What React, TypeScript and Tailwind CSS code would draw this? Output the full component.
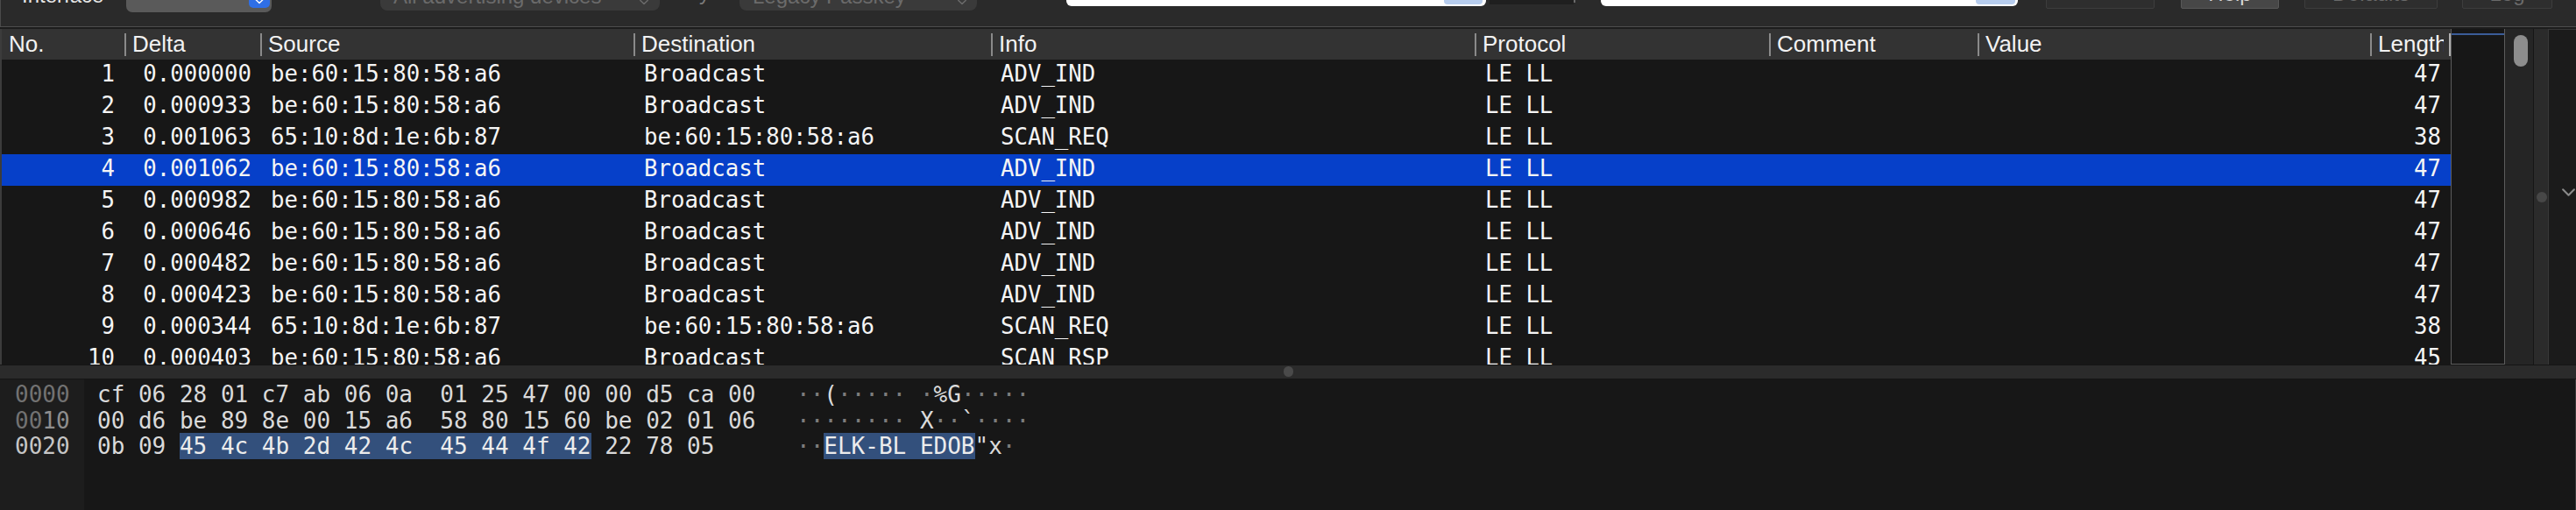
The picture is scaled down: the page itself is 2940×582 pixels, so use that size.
import React from "react";

const SANS = "font-['Liberation_Sans',Arial,sans-serif]";
const MONO = "font-['DejaVu_Sans_Mono',monospace]";

type Pkt = [string, string, string, string, string, string];

const ROWS: Pkt[] = [
  ["1", "0.000000", "be:60:15:80:58:a6", "Broadcast", "ADV_IND", "47"],
  ["2", "0.000933", "be:60:15:80:58:a6", "Broadcast", "ADV_IND", "47"],
  ["3", "0.001063", "65:10:8d:1e:6b:87", "be:60:15:80:58:a6", "SCAN_REQ", "38"],
  ["4", "0.001062", "be:60:15:80:58:a6", "Broadcast", "ADV_IND", "47"],
  ["5", "0.000982", "be:60:15:80:58:a6", "Broadcast", "ADV_IND", "47"],
  ["6", "0.000646", "be:60:15:80:58:a6", "Broadcast", "ADV_IND", "47"],
  ["7", "0.000482", "be:60:15:80:58:a6", "Broadcast", "ADV_IND", "47"],
  ["8", "0.000423", "be:60:15:80:58:a6", "Broadcast", "ADV_IND", "47"],
  ["9", "0.000344", "65:10:8d:1e:6b:87", "be:60:15:80:58:a6", "SCAN_REQ", "38"],
  ["10", "0.000403", "be:60:15:80:58:a6", "Broadcast", "SCAN_RSP", "45"],
];

function Chevron({ className, color }: { className: string; color: string }) {
  return (
    <svg className={className} viewBox="0 0 16 10" fill="none">
      <polyline points="2,2 8,8 14,2" stroke={color} strokeWidth="2" strokeLinecap="round" strokeLinejoin="round" />
    </svg>
  );
}

function HCell({ w, label }: { w: string; label: string }) {
  return (
    <div className={`flex ${w} shrink-0 items-center overflow-hidden`}>
      <div className="h-[26px] w-[2px] shrink-0 bg-[#8a8a8a]" />
      <span className="ml-[7px] whitespace-nowrap">{label}</span>
    </div>
  );
}

function Toolbar() {
  return (
    <div className="h-[30px] shrink-0 overflow-hidden border-l border-[#4a4a4a] bg-[#2a2a2a]">
      <div className={`mt-[-40px] flex items-start ${SANS} text-[24px] leading-[28px]`}>
        <div className="ml-[24px] flex h-[49px] w-[119px] shrink-0 items-end text-[#e6e6e6]">Interface</div>
        <div className="flex h-[54px] w-[166px] shrink-0 items-end justify-end rounded-[7px] bg-[#5a5a5a] pb-[5px] pr-[2px]">
          <div className="flex h-[36px] w-[24px] items-end justify-center rounded-[5px] bg-[#2f6fe6] pb-[4px]">
            <Chevron className="h-[7px] w-[12px]" color="#ffffff" />
          </div>
        </div>
        <div className="ml-[124px] flex h-[52px] w-[319px] shrink-0 items-end justify-between rounded-[8px] bg-[#3a3a3a] pb-[2px] pl-[15px] pr-[12px] text-[#6b6b6b]">
          <span>All advertising devices</span>
          <Chevron className="mb-[4px] h-[7px] w-[12px]" color="#6b6b6b" />
        </div>
        <div className="flex h-[46px] w-[91px] shrink-0 items-end justify-end pr-[34px] text-[#7a7a7a]">Key</div>
        <div className="flex h-[52px] w-[271px] shrink-0 items-end justify-between rounded-[8px] bg-[#3a3a3a] pb-[2px] pl-[15px] pr-[11px] text-[#6b6b6b]">
          <span>Legacy Passkey</span>
          <Chevron className="mb-[4px] h-[7px] w-[12px]" color="#6b6b6b" />
        </div>
        <div className="ml-[102px] flex h-[47px] w-[479px] shrink-0 items-end justify-end rounded-[6px] bg-white pb-[2px] pr-[4px]">
          <div className="h-[30px] w-[44px] rounded-[4px] bg-[#b7cdee]" />
        </div>
        <div className="ml-[4px] h-[45px] w-[96px] shrink-0 bg-[#1f1f1f]" />
        <div className="h-[43px] w-[2px] shrink-0 bg-[#6a6a6a]" />
        <div className="ml-[29px] flex h-[47px] w-[476px] shrink-0 items-end justify-end rounded-[6px] bg-white pb-[2px] pr-[3px]">
          <div className="h-[30px] w-[45px] rounded-[4px] bg-[#b7cdee]" />
        </div>
        <div className="ml-[32px] h-[50px] w-[124px] shrink-0 rounded-[2px] border border-[#3d3d3d] bg-[#2e2e2e]" />
        <div className="ml-[30px] flex h-[50px] w-[112px] shrink-0 items-end justify-center rounded-[2px] border border-[#585858] bg-[#474747] pb-[2px] text-[#d6d6d6]">Help</div>
        <div className="ml-[29px] flex h-[50px] w-[152px] shrink-0 items-end justify-center rounded-[2px] border border-[#3d3d3d] bg-[#2e2e2e] pb-[2px] text-[#6b6b6b]">Defaults</div>
        <div className="ml-[28px] flex h-[50px] w-[103px] shrink-0 items-end justify-center rounded-[2px] border border-[#3d3d3d] bg-[#2e2e2e] pb-[2px] text-[#6b6b6b]">Log</div>
      </div>
    </div>
  );
}

function Row({ r, sel }: { r: Pkt; sel: boolean }) {
  const [no, delta, src, dst, info, len] = r;
  return (
    <div className={`flex h-[36px] shrink-0 items-start whitespace-pre leading-[32px] ${sel ? "bg-[#0640c9]" : ""}`}>
      <div className="h-[36px] w-[142px] shrink-0 border-l-2 border-[#3c3c3c] pr-[11px] text-right">{no}</div>
      <div className="w-[155px] shrink-0 pr-[10px] text-right">{delta}</div>
      <div className="w-[426px] shrink-0 pl-[12px]">{src}</div>
      <div className="w-[408px] shrink-0 pl-[12px]">{dst}</div>
      <div className="w-[552px] shrink-0 pl-[11px]">{info}</div>
      <div className="w-[336px] shrink-0 pl-[12px]">LE LL</div>
      <div className="w-[238px] shrink-0" />
      <div className="w-[448px] shrink-0" />
      <div className="w-[92px] shrink-0 pr-[11px] text-right">{len}</div>
    </div>
  );
}

function PacketList() {
  return (
    <div className="flex h-[383px] shrink-0">
      <div className="flex w-[2797px] shrink-0 flex-col overflow-hidden bg-[#171717]">
        <div className={`flex h-[35px] shrink-0 items-center bg-[#333333] ${SANS} text-[26px] text-[#f2f2f2]`}>
          <div className="flex h-[35px] w-[142px] shrink-0 items-center border-l-2 border-[#3c3c3c] pl-[8px]">No.</div>
          <HCell w="w-[155px]" label="Delta" />
          <HCell w="w-[426px]" label="Source" />
          <HCell w="w-[408px]" label="Destination" />
          <HCell w="w-[552px]" label="Info" />
          <HCell w="w-[336px]" label="Protocol" />
          <HCell w="w-[238px]" label="Comment" />
          <HCell w="w-[448px]" label="Value" />
          <div className="flex w-[92px] shrink-0 items-center">
            <div className="h-[26px] w-[2px] shrink-0 bg-[#8a8a8a]" />
            <div className="ml-[7px] w-[75px] shrink-0 overflow-hidden whitespace-nowrap">Length</div>
            <div className="ml-[6px] h-[26px] w-[2px] shrink-0 bg-[#b0b0b0]" />
          </div>
        </div>
        <div className={`flex flex-col ${MONO} text-[25.7px] text-[#f5f5f5]`}>
          {ROWS.map((r, i) => (
            <Row key={r[0]} r={r} sel={i === 3} />
          ))}
        </div>
      </div>
      <div className="w-[62px] shrink-0 border-x border-b border-[#5c5c5c] bg-[#171717]">
        <div className="mt-[5px] h-[2px] bg-[#3b5c98]" />
      </div>
      <div className="w-[33px] shrink-0 border-r border-[#161616] bg-[#252525] pl-[10px] pt-[7px]">
        <div className="h-[36px] w-[16px] rounded-full bg-[#8d8d8d]" />
      </div>
      <div className="w-[16px] shrink-0 bg-[#2b2b2b] pl-[3px] pt-[186px]">
        <div className="h-[12px] w-[12px] rounded-full bg-[#474747]" />
      </div>
      <div className="flex-1 border-l border-t border-[#383838] bg-[#1b1b1b] pl-[14px] pt-[180px]">
        <Chevron className="h-[11px] w-[17px]" color="#8a8a8a" />
      </div>
    </div>
  );
}

const Dot = () => <span className="text-[#7c7c7c]">·</span>;
const HL = "bg-[#33507c] text-[#ececec]";

function ByteView() {
  return (
    <div className={`flex min-h-0 flex-1 border-r border-[#3a3a3a] bg-[#171717] ${MONO} text-[26px] leading-[29.5px]`}>
      <div className="w-[96px] shrink-0 bg-[#1d1d1d] pl-[17px] pt-[3px]">
        <div className="text-[#727272]">0000</div>
        <div>
          <span className="text-[#727272]">00</span>
          <span className="text-[#8e8e8e]">10</span>
        </div>
        <div className="text-[#c6c6c6]">0020</div>
      </div>
      <div className="flex pl-[15px] pt-[3px] text-[#dadada]">
        <div className="w-[798px] shrink-0 whitespace-pre">
          <div>cf 06 28 01 c7 ab 06 0a  01 25 47 00 00 d5 ca 00</div>
          <div>00 d6 be 89 8e 00 15 a6  58 80 15 60 be 02 01 06</div>
          <div>
            0b 09 <span className={HL}>45 4c 4b 2d 42 4c  45 44 4f 42</span> 22 78 05
          </div>
        </div>
        <div className="whitespace-pre">
          <div>
            <Dot /><Dot />(<Dot /><Dot /><Dot /><Dot /><Dot /> <Dot />%G<Dot /><Dot /><Dot /><Dot /><Dot />
          </div>
          <div>
            <Dot /><Dot /><Dot /><Dot /><Dot /><Dot /><Dot /><Dot /> X<Dot /><Dot />`<Dot /><Dot /><Dot /><Dot />
          </div>
          <div>
            <Dot /><Dot /><span className={HL}>ELK-BL EDOB</span>"x<Dot />
          </div>
        </div>
      </div>
    </div>
  );
}

export default function App() {
  return (
    <div className="flex h-[582px] w-[2940px] flex-col overflow-hidden bg-[#2a2a2a]">
      <Toolbar />
      <div className="h-[1px] shrink-0 bg-[#4e4e4e]" />
      <div className="h-[2px] shrink-0 bg-[#1c1c1c]" />
      <PacketList />
      <div className="h-[17px] shrink-0 border-y border-[#151515] bg-[#2b2b2b] pl-[1465px] pt-[1px]">
        <div className="h-[12px] w-[11px] rounded-full bg-[#4a4a4a]" />
      </div>
      <ByteView />
    </div>
  );
}
